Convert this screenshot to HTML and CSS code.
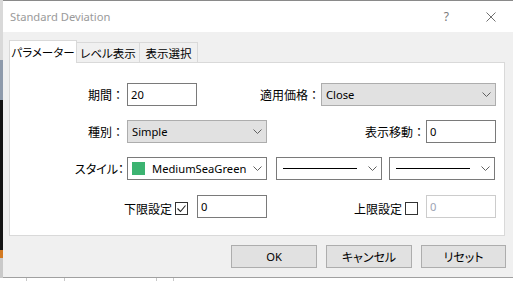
FILE: index.html
```html
<!DOCTYPE html>
<html lang="ja">
<head>
<meta charset="utf-8">
<title>Standard Deviation</title>
<link rel="stylesheet" href="styles.css">
</head>
<body>
<div class="screen">
  <div class="strip"></div>
  <div class="dialog">
    <div class="titlebar">
      <span class="title lt">Standard Deviation</span>
      <span class="help">?</span>
      <svg class="close" width="10" height="10" viewBox="0 0 10 10"><path d="M0.5 0.5 L9.5 9.5 M9.5 0.5 L0.5 9.5" stroke="#6f6f6f" stroke-width="1" fill="none"/></svg>
    </div>
    <div class="body">
      <div class="tabs">
        <div class="tab active t1">パラメーター</div>
        <div class="tab t2">レベル表示</div>
        <div class="tab t3">表示選択</div>
      </div>
      <div class="panel">
        <div class="row">
          <span class="lab">期間：</span>
          <div class="input w70 ml3 lt">20</div>
          <span class="lab-flex">適用価格：</span>
          <div class="select w175 ml1"><span class="lt">Close</span><svg class="chev" width="9" height="5" viewBox="0 0 9 5"><polyline points="0.5,0.5 4.5,4.5 8.5,0.5" fill="none" stroke="#606060"/></svg></div>
        </div>
        <div class="row">
          <span class="lab">種別：</span>
          <div class="select w140 ml3"><span class="lt">Simple</span><svg class="chev" width="9" height="5" viewBox="0 0 9 5"><polyline points="0.5,0.5 4.5,4.5 8.5,0.5" fill="none" stroke="#606060"/></svg></div>
          <span class="lab-flex">表示移動：</span>
          <div class="input w70 ml1 lt">0</div>
        </div>
        <div class="row">
          <span class="lab kana">スタイル：</span>
          <div class="select white w140 ml3"><span class="swatch"></span><span class="swname lt">MediumSeaGreen</span><svg class="chev" width="9" height="5" viewBox="0 0 9 5"><polyline points="0.5,0.5 4.5,4.5 8.5,0.5" fill="none" stroke="#606060"/></svg></div>
          <div class="select white w106 ml9"><span class="line"></span><svg class="chev" width="9" height="5" viewBox="0 0 9 5"><polyline points="0.5,0.5 4.5,4.5 8.5,0.5" fill="none" stroke="#606060"/></svg></div>
          <div class="select white w106 ml7"><span class="line"></span><svg class="chev" width="9" height="5" viewBox="0 0 9 5"><polyline points="0.5,0.5 4.5,4.5 8.5,0.5" fill="none" stroke="#606060"/></svg></div>
        </div>
        <div class="row r4">
          <div class="chkgroup g1"><span>下限設定</span><span class="chk"><svg width="11" height="11" viewBox="0 0 11 11"><polyline points="1.5,5.5 4.5,8.5 9.5,2.5" fill="none" stroke="#222" stroke-width="1.1"/></svg></span></div>
          <div class="input w70 ml9 lt">0</div>
          <div class="chkgroup g2"><span>上限設定</span><span class="chk"></span></div>
          <div class="input w70 disabled lt">0</div>
        </div>
      </div>
      <div class="buttons">
        <div class="btn lt">OK</div>
        <div class="btn kana">キャンセル</div>
        <div class="btn kana b3">リセット</div>
      </div>
    </div>
  </div>
  <div class="behind">
    <span class="c c1"></span>
    <span class="c c2"></span>
    <span class="c c3"></span>
    <span class="c c4"></span>
    <span class="c c5"></span>
  </div>
</div>
</body>
</html>
```
FILE: styles.css
```css
html, body {
  margin: 0;
  padding: 0;
}
body {
  width: 513px;
  height: 281px;
  overflow: hidden;
  background: #fff;
  color: #000;
  font-family: "Segoe UI", "Noto Sans", "Noto Sans CJK JP", sans-serif;
  font-size: 12px;
}
.lt {
  font-size: 11.2px;
}
.screen {
  display: grid;
  grid-template-columns: 3px 510px;
  grid-template-rows: 278px 3px;
  width: 513px;
  height: 281px;
}
.strip {
  background: linear-gradient(to bottom,
    #d9d9d9 0, #d9d9d9 60px,
    #8e9aab 60px, #8e9aab 100px,
    #141414 100px, #141414 250px,
    #d27a22 250px, #d27a22 258px,
    #c9c9c9 258px);
}
.dialog {
  display: flex;
  flex-direction: column;
  background: #f0f0f0;
  border-top: 1px solid #8a8a8a;
  border-bottom: 1px solid #a0a0a0;
}
.titlebar {
  height: 31px;
  background: #fff;
  display: flex;
  align-items: center;
  flex: none;
}
.title {
  flex: 1;
  padding-left: 7px;
  color: #9a9a9a;
}
.help {
  color: #7a7a7a;
  margin-right: 37px;
}
.close {
  margin-right: 17px;
}
.body {
  flex: 1;
  padding: 8px 8px 0 6px;
}
.tabs {
  display: flex;
  align-items: flex-end;
  height: 22px;
}
.tab {
  box-sizing: border-box;
  height: 20px;
  border: 1px solid #d9d9d9;
  border-bottom: none;
  background: #f0f0f0;
  display: flex;
  align-items: center;
  justify-content: center;
  margin-left: -1px;
  font-feature-settings: "palt";
  font-size: 11.5px;
}
.tab.active {
  height: 23px;
  margin-left: 0;
  margin-bottom: -1px;
  background: #fff;
  position: relative;
  z-index: 1;
}
.t1 { width: 68px; }
.t2 { width: 64px; }
.t3 { width: 59px; }
.panel {
  box-sizing: border-box;
  height: 174px;
  border: 1px solid #d9d9d9;
  background: #fff;
  padding: 20px 8px 0 0;
}
.row {
  display: flex;
  align-items: center;
  height: 23px;
}
.row + .row { margin-top: 14px; }
.row.r4 { margin-top: 15px; }
.lab {
  flex: none;
  width: 114px;
  text-align: right;
}
.lab-flex {
  flex: 1;
  text-align: right;
}
.kana { font-feature-settings: "palt"; }
.ml1 { margin-left: 1px; }
.ml3 { margin-left: 3px; }
.ml7 { margin-left: 7px; }
.ml9 { margin-left: 9px; }
.w70 { width: 70px; }
.w106 { width: 106px; }
.w140 { width: 140px; }
.w175 { width: 175px; }
.input {
  flex: none;
  box-sizing: border-box;
  height: 23px;
  border: 1px solid #7a7a7a;
  background: #fff;
  padding-left: 3px;
  display: flex;
  align-items: center;
}
.input.disabled {
  border-color: #cccccc;
  color: #9ca3b4;
}
.select {
  flex: none;
  box-sizing: border-box;
  height: 23px;
  border: 1px solid #adadad;
  background: #e1e1e1;
  padding-left: 4px;
  display: flex;
  align-items: center;
}
.select.white {
  border-color: #7a7a7a;
  background: #fff;
}
.chev {
  margin-left: auto;
  margin-right: 4px;
  flex: none;
}
.swatch {
  width: 13px;
  height: 13px;
  background: #3cb371;
  flex: none;
}
.swname {
  margin-left: 7px;
  white-space: nowrap;
}
.line {
  width: 74px;
  height: 1px;
  background: #000;
  margin-left: 2px;
  flex: none;
}
.chkgroup {
  display: flex;
  align-items: center;
  justify-content: flex-end;
  margin-top: 4px;
}
.g1 {
  flex: none;
  width: 178px;
}
.g2 {
  flex: 1;
  margin-right: 8px;
}
.chk {
  box-sizing: border-box;
  width: 13px;
  height: 13px;
  border: 1px solid #333;
  background: #fff;
  margin-left: 3px;
  display: flex;
  align-items: center;
  justify-content: center;
}
.buttons {
  display: flex;
  justify-content: flex-end;
  gap: 9px;
  margin-top: 9px;
  margin-right: -1px;
}
.btn {
  box-sizing: border-box;
  width: 86px;
  height: 23px;
  border: 1px solid #adadad;
  background: #e1e1e1;
  display: flex;
  align-items: center;
  justify-content: center;
}
.btn.b3 { width: 85px; }
.behind {
  grid-column: 1 / 3;
  display: flex;
  height: 3px;
  overflow: hidden;
  background: #fff;
}
.c {
  box-sizing: border-box;
  border-right: 1px solid #c8c8c8;
  flex: none;
}
.c1 { width: 27px; }
.c2 { width: 38px; }
.c3 { width: 92px; }
.c4 { width: 17px; }
.c5 { flex: 1; border-right: none; }
```
